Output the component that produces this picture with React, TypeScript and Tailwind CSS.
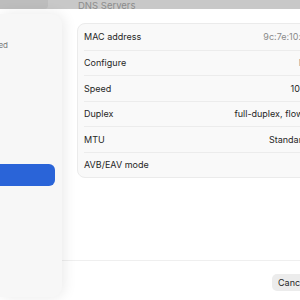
import React from 'react';

const ROWS: { label: string; value: string; muted?: boolean }[] = [
  { label: 'MAC address', value: '9c:7e:10:a4:d2:3f', muted: true },
  { label: 'Configure', value: 'Manually', muted: true },
  { label: 'Speed', value: '1000baseT' },
  { label: 'Duplex', value: 'full-duplex, flow-control' },
  { label: 'MTU', value: 'Standard (1500)' },
  { label: 'AVB/EAV mode', value: '' },
];

export default function App() {
  return (
    <div className="w-[300px] h-[300px] overflow-hidden bg-white flex flex-col font-['Inter','Liberation_Sans',sans-serif] text-[9px] text-[#262626]">
      {/* window strip behind the sheet */}
      <div className="h-[9px] shrink-0 bg-[#c8c8c8] flex items-end overflow-hidden">
        <div className="w-[48px] h-[9px] bg-[#bdbdbd] rounded-br-[4px]" />
        <span className="ml-[30px] leading-none text-[9.5px] text-[#8c8c8c] whitespace-nowrap -mb-[1px]">DNS Servers</span>
      </div>

      <div className="flex flex-1 min-h-0">
        {/* sidebar card */}
        <div className="w-[62px] shrink-0 pt-[5px] pb-[3px] relative z-10">
          <div className="h-full bg-[#f7f7f7] rounded-r-[10px] shadow-[2px_0_14px_rgba(0,0,0,0.09)] overflow-hidden">
            <div className="mt-[25px] flex justify-end pr-[54px] text-[8px] text-[#7a7a7a] whitespace-nowrap">Connected</div>
            <div className="mt-[113px] mr-[7px] h-[22px] bg-[#2a64d8] rounded-r-[6px]" />
          </div>
        </div>

        {/* detail sheet */}
        <div className="flex-1 flex flex-col min-w-0">
          <div className="ml-[15px] mt-[14px] w-[267px] shrink-0 bg-[#f9f9f9] border border-[#ebebeb] rounded-[8px] px-[6px]">
            {ROWS.map((row, i) => (
              <div
                key={row.label}
                className={`h-[25.5px] flex items-center justify-between whitespace-nowrap ${i > 0 ? 'border-t border-[#ececec]' : ''}`}
              >
                <span>{row.label}</span>
                <span className={row.muted ? 'text-[#8a8a8a]' : 'text-[#262626]'}>{row.value}</span>
              </div>
            ))}
          </div>

          <div className="flex-1" />
          <div className="border-t border-[#efefef] h-[40px] flex items-start pt-[13px] pl-[210px] shrink-0">
            <button className="h-[17px] px-[6px] bg-[#ececec] rounded-[5px] leading-none text-[#262626] whitespace-nowrap">
              Cancel
            </button>
          </div>
        </div>
      </div>
    </div>
  );
}
